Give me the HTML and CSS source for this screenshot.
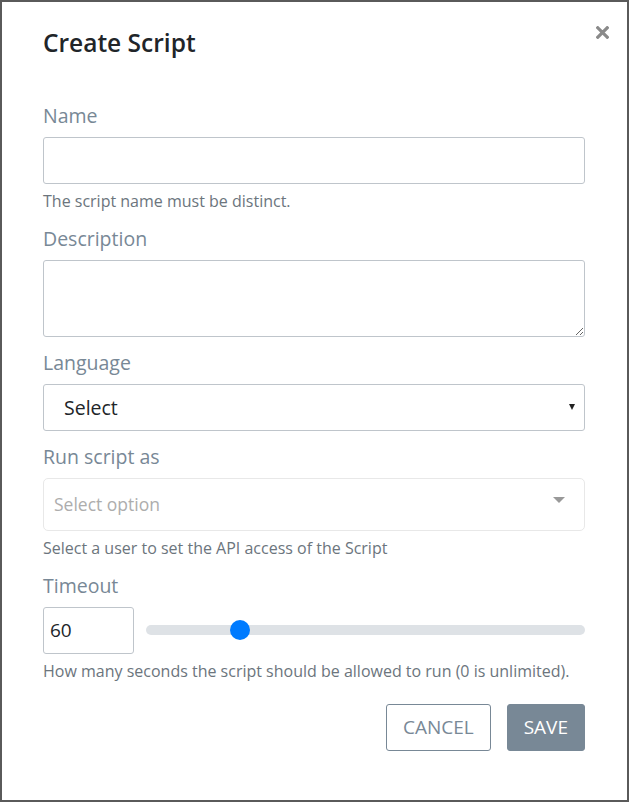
FILE: index.html
```html
<!DOCTYPE html>
<html lang="en">
<head>
<meta charset="utf-8">
<title>Create Script</title>
<link rel="stylesheet" href="styles.css">
</head>
<body>
<div class="modal">
  <h2 class="title">Create Script</h2>
  <button class="close" aria-label="Close">
    <svg width="13" height="13" viewBox="0 0 13 13"><path d="M1.8 1.8 L11.2 11.2 M11.2 1.8 L1.8 11.2" stroke="#8a8a8a" stroke-width="3.2" stroke-linecap="square"/></svg>
  </button>
  <div class="form">
    <div class="group">
      <label class="label">Name</label>
      <input class="input" type="text">
      <div class="help">The script name must be distinct.</div>
    </div>
    <div class="group">
      <label class="label">Description</label>
      <textarea class="input textarea"></textarea>
    </div>
    <div class="group">
      <label class="label">Language</label>
      <div class="select"><span>Select</span><span class="select-arrow"></span></div>
    </div>
    <div class="group">
      <label class="label">Run script as</label>
      <div class="multi"><span>Select option</span><span class="multi-caret"></span></div>
      <div class="help">Select a user to set the API access of the Script</div>
    </div>
    <div class="group">
      <label class="label">Timeout</label>
      <div class="timeout-row">
        <input class="input number" type="text" value="60">
        <input class="range" type="range" min="0" max="300" value="60">
      </div>
      <div class="help">How many seconds the script should be allowed to run (0 is unlimited).</div>
    </div>
  </div>
  <div class="actions">
    <button class="btn btn-outline">Cancel</button>
    <button class="btn btn-save">Save</button>
  </div>
</div>
</body>
</html>
```
FILE: styles.css
```css
html, body {
  margin: 0;
  padding: 0;
}
body {
  font-family: "Open Sans", "Noto Sans", sans-serif;
  background: #fff;
}
.modal {
  position: relative;
  box-sizing: border-box;
  width: 629px;
  height: 802px;
  border: 2px solid #5a5a5a;
  padding: 27px 42px 0 41px;
  background: #fff;
}
.title {
  margin: 0;
  font-size: 24.5px;
  font-weight: 600;
  line-height: 28.8px;
  color: #212529;
}
.close {
  position: absolute;
  top: 24px;
  right: 18px;
  padding: 0;
  margin: 0;
  border: 0;
  background: transparent;
  width: 13px;
  height: 13px;
  line-height: 0;
}
.form {
  margin-top: 44px;
}
.group {
  margin-bottom: 12px;
}
.label {
  display: block;
  font-size: 19.5px;
  line-height: 28px;
  color: #788896;
  margin-bottom: 7px;
}
.input {
  display: block;
  box-sizing: border-box;
  width: 100%;
  height: 47px;
  margin: 0;
  border: 1px solid #bfc5cb;
  border-radius: 3px;
  background: #fff;
  font-family: inherit;
  font-size: 19px;
  color: #212529;
}
.textarea {
  height: 77px;
  resize: both;
}
.help {
  font-size: 16px;
  line-height: 24px;
  color: #6c757d;
  margin-top: 5px;
}
.select {
  box-sizing: border-box;
  height: 47px;
  display: flex;
  align-items: center;
  justify-content: space-between;
  padding: 0 9px 0 20px;
  border: 1px solid #bfc5cb;
  border-radius: 3px;
  font-size: 19.5px;
  color: #212529;
}
.select-arrow {
  width: 0;
  height: 0;
  border-left: 3.5px solid transparent;
  border-right: 3.5px solid transparent;
  border-top: 6px solid #222;
}
.multi {
  box-sizing: border-box;
  height: 53px;
  display: flex;
  align-items: center;
  justify-content: space-between;
  padding: 0 19px 0 10px;
  border: 1px solid #e8e8e8;
  border-radius: 5px;
  font-size: 17.5px;
  color: #adadad;
}
.multi-caret {
  width: 0;
  height: 0;
  border-left: 6px solid transparent;
  border-right: 6px solid transparent;
  border-top: 6px solid #999;
  margin-bottom: 8px;
}
.timeout-row {
  display: flex;
  align-items: center;
  gap: 12px;
}
.number {
  width: 91px;
  flex: none;
  padding: 0 6px;
}
.range {
  -webkit-appearance: none;
  appearance: none;
  flex: 1;
  height: 20px;
  margin: 0;
  background: transparent;
}
.range::-webkit-slider-runnable-track {
  height: 10px;
  border-radius: 5px;
  background: #dee2e6;
}
.range::-webkit-slider-thumb {
  -webkit-appearance: none;
  appearance: none;
  width: 20px;
  height: 20px;
  margin-top: -5px;
  border: 0;
  border-radius: 50%;
  background: #007bff;
}
.actions {
  display: flex;
  justify-content: flex-end;
  gap: 16px;
  margin-top: 21px;
}
.btn {
  box-sizing: border-box;
  height: 47px;
  padding: 0 16px;
  border-radius: 3px;
  font-family: inherit;
  font-size: 19px;
  text-transform: uppercase;
  cursor: pointer;
}
.btn-outline {
  background: #fff;
  border: 1px solid #788896;
  color: #788896;
}
.btn-save {
  background: #788896;
  border: 1px solid #788896;
  color: #fff;
}
```
